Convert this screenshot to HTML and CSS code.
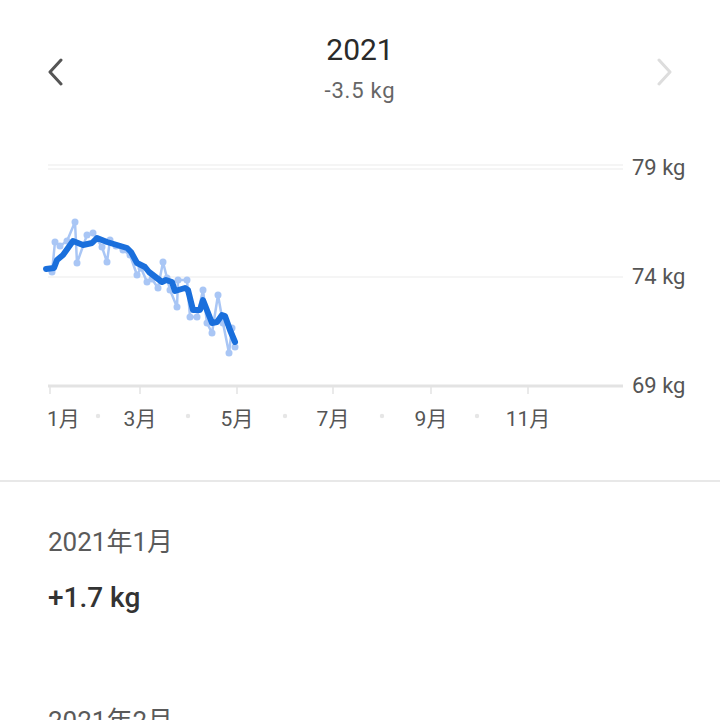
FILE: index.html
```html
<!DOCTYPE html>
<html lang="ja">
  <head>
    <meta charset="UTF-8" />
    <meta name="viewport" content="width=device-width, initial-scale=1.0" />
    <title>体重 2021</title>
    <link rel="stylesheet" href="styles.css">
  </head>
  <body>
    <header class="year-head">
      <button class="nav nav-prev" aria-label="前の年">
        <svg width="18" height="28" viewBox="0 0 18 28">
          <path d="M15 2 L4 14 L15 26" />
        </svg>
      </button>
      <div class="year-title">
        <h1>2021</h1>
        <p class="year-diff">-3.5 kg</p>
      </div>
      <button class="nav nav-next" aria-label="次の年" disabled>
        <svg width="18" height="28" viewBox="0 0 18 28">
          <path d="M3 2 L14 14 L3 26" />
        </svg>
      </button>
    </header>

    <section class="chart">
      <svg width="720" height="300" viewBox="0 140 720 300">
        <!-- grid -->
        <line class="grid" x1="48" y1="165" x2="623" y2="165" />
        <line class="grid" x1="48" y1="169" x2="623" y2="169" />
        <line class="grid" x1="48" y1="277" x2="623" y2="277" />
        <line class="axis" x1="48" y1="386" x2="623" y2="386" />

        <text class="y-label" x="632" y="175">79 kg</text>
        <text class="y-label" x="632" y="284">74 kg</text>
        <text class="y-label" x="632" y="393">69 kg</text>

        <!-- month ticks -->
        <g class="ticks">
          <line x1="50" y1="386" x2="50" y2="394" />
          <line x1="140" y1="386" x2="140" y2="394" />
          <line x1="237" y1="386" x2="237" y2="394" />
          <line x1="333" y1="386" x2="333" y2="394" />
          <line x1="431" y1="386" x2="431" y2="394" />
          <line x1="528" y1="386" x2="528" y2="394" />
        </g>
        <g class="x-dots">
          <circle cx="98" cy="416" r="2.2" />
          <circle cx="188" cy="416" r="2.2" />
          <circle cx="285" cy="416" r="2.2" />
          <circle cx="382" cy="416" r="2.2" />
          <circle cx="477" cy="416" r="2.2" />
        </g>
        <text class="x-label" x="47" y="426">1月</text>
        <text class="x-label mid" x="140" y="426">3月</text>
        <text class="x-label mid" x="237" y="426">5月</text>
        <text class="x-label mid" x="333" y="426">7月</text>
        <text class="x-label mid" x="431" y="426">9月</text>
        <text class="x-label mid" x="528" y="426">11月</text>

        <!-- raw readings -->
        <polyline class="raw" points="52,272 55,242 60,246 67,241 75,222 77,263 87,235 93,233 102,247 107,262 110,240 116,246 123,250 130,255 137,275 141,268 147,282 152,279 158,288 163,262 167,278 170,290 177,307 178,280 187,280 190,317 197,317 203,290 207,323 212,333 218,295 223,323 229,353 232,328 235,347" />
        <g class="raw-dots">
          <circle cx="52" cy="272" r="3.5" /><circle cx="55" cy="242" r="3.5" />
          <circle cx="60" cy="246" r="3.5" /><circle cx="67" cy="241" r="3.5" />
          <circle cx="75" cy="222" r="3.5" /><circle cx="77" cy="263" r="3.5" />
          <circle cx="87" cy="235" r="3.5" /><circle cx="93" cy="233" r="3.5" />
          <circle cx="102" cy="247" r="3.5" /><circle cx="107" cy="262" r="3.5" />
          <circle cx="110" cy="240" r="3.5" /><circle cx="116" cy="246" r="3.5" />
          <circle cx="123" cy="250" r="3.5" /><circle cx="130" cy="255" r="3.5" />
          <circle cx="137" cy="275" r="3.5" /><circle cx="141" cy="268" r="3.5" />
          <circle cx="147" cy="282" r="3.5" /><circle cx="152" cy="279" r="3.5" />
          <circle cx="158" cy="288" r="3.5" /><circle cx="163" cy="262" r="3.5" />
          <circle cx="167" cy="278" r="3.5" /><circle cx="170" cy="290" r="3.5" />
          <circle cx="177" cy="307" r="3.5" /><circle cx="178" cy="280" r="3.5" />
          <circle cx="187" cy="280" r="3.5" /><circle cx="190" cy="317" r="3.5" />
          <circle cx="197" cy="317" r="3.5" /><circle cx="203" cy="290" r="3.5" />
          <circle cx="207" cy="323" r="3.5" /><circle cx="212" cy="333" r="3.5" />
          <circle cx="218" cy="295" r="3.5" /><circle cx="223" cy="323" r="3.5" />
          <circle cx="229" cy="353" r="3.5" /><circle cx="232" cy="328" r="3.5" />
          <circle cx="235" cy="347" r="3.5" />
        </g>

        <!-- trend -->
        <polyline class="trend" points="46,269 54,268 57,260 63,255 73,241 83,245 92,243 97,238 107,242 127,248 131,252 137,263 145,267 149,272 162,282 166,280 172,282 175,291 185,288 188,290 193,310 200,310 203,300 212,323 217,322 222,315 225,316 230,330 235,342" />
      </svg>
    </section>

    <ul class="months">
      <li class="month">
        <p class="month-name">2021年1月</p>
        <p class="month-diff">+1.7 kg</p>
      </li>
      <li class="month">
        <p class="month-name">2021年2月</p>
        <p class="month-diff">-0.6 kg</p>
      </li>
    </ul>
  </body>
</html>
```

FILE: styles.css
```css
body {
  margin: 0;
  font-family: Roboto, "Noto Sans CJK JP", sans-serif;
  background-color: #fff;
  color: #333;
  overflow: hidden;
}
.year-head {
  height: 140px;
  display: flex;
  align-items: flex-start;
  justify-content: space-between;
  padding: 0 46px;
  box-sizing: border-box;
}
.nav {
  margin-top: 58px;
  padding: 0;
  border: none;
  background: none;
  cursor: pointer;
}
.nav svg path {
  fill: none;
  stroke-width: 3;
  stroke-linecap: round;
  stroke-linejoin: round;
}
.nav-prev svg path {
  stroke: #555;
}
.nav-next svg path {
  stroke: #ddd;
}
.year-title {
  text-align: center;
  padding-top: 32px;
}
.year-title h1 {
  margin: 0;
  font-size: 30px;
  font-weight: 400;
  line-height: 36px;
  color: #2a2a2a;
}
.year-diff {
  margin: 10px 0 0;
  font-size: 22px;
  line-height: 26px;
  letter-spacing: 0.8px;
  color: #666;
}
.chart svg {
  display: block;
}
.grid {
  stroke: #ebebeb;
  stroke-width: 1.2;
}
.axis {
  stroke: #e3e3e3;
  stroke-width: 3;
}
.ticks line {
  stroke: #e3e3e3;
  stroke-width: 1.5;
}
.x-dots circle {
  fill: #e6e6e6;
}
.y-label {
  font-size: 22px;
  fill: #555;
}
.x-label {
  font-size: 21px;
  fill: #555;
}
.x-label.mid {
  text-anchor: middle;
}
.raw {
  fill: none;
  stroke: #a9c6f5;
  stroke-width: 2.5;
  stroke-linejoin: round;
}
.raw-dots circle {
  fill: #a9c6f5;
}
.trend {
  fill: none;
  stroke: #1a6fdc;
  stroke-width: 6;
  stroke-linecap: round;
  stroke-linejoin: round;
}
.months {
  list-style: none;
  margin: 40px 0 0;
  padding: 0;
  border-top: 2px solid #e8e8e8;
}
.month {
  padding: 44px 48px 46px;
}
.month-name {
  margin: 0;
  font-size: 26px;
  line-height: 32px;
  color: #5a5a5a;
}
.month-diff {
  margin: 23px 0 0;
  font-size: 28px;
  font-weight: 500;
  line-height: 34px;
  color: #333;
}
```
